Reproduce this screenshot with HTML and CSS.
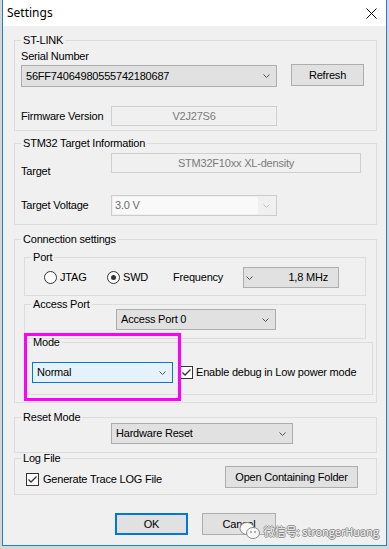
FILE: index.html
```html
<!DOCTYPE html>
<html>
<head>
<meta charset="utf-8">
<title>Settings</title>
<link rel="stylesheet" href="styles.css">
</head>
<body>
<div class="win">
    <div class="titlebar">
        <span class="title">Settings</span>
        <svg class="close" width="11" height="11" viewBox="0 0 11 11"><path d="M0.5 0.5L10.5 10.5M10.5 0.5L0.5 10.5" stroke="#000" stroke-width="1"/></svg>
    </div>

    <div class="content">
        <!-- ST-LINK -->
        <fieldset class="grp stlink">
            <legend>ST-LINK</legend>
            <div class="lbl">Serial Number</div>
            <div class="row serial_row">
                <div class="combo serial"><span>56FF74064980555742180687</span><svg class="chev" width="7" height="4" viewBox="0 0 7 4"><polyline points="0.5,0.5 3.5,3.5 6.5,0.5" fill="none" stroke="#505050"/></svg></div>
                <div class="btn refresh">Refresh</div>
            </div>
            <div class="row fw_row">
                <span class="col">Firmware Version</span>
                <div class="field fw">V2J27S6</div>
            </div>
        </fieldset>

        <!-- 目标信息 -->
        <fieldset class="grp target">
            <legend>STM32 Target Information</legend>
            <div class="row tgt_row">
                <span class="col tgt_lbl">Target</span>
                <div class="field tgt">STM32F10xx XL-density</div>
            </div>
            <div class="row volt_row">
                <span class="col">Target Voltage</span>
                <div class="combo off volt"><span class="inner">3.0 V</span><svg class="chev" width="7" height="4" viewBox="0 0 7 4"><polyline points="0.5,0.5 3.5,3.5 6.5,0.5" fill="none" stroke="#bdbdbd"/></svg></div>
            </div>
        </fieldset>

        <!-- 连接设置 -->
        <fieldset class="grp conn">
            <legend>Connection settings</legend>
            <fieldset class="grp port">
                <legend>Port</legend>
                <div class="row">
                    <label class="radio jtag"><span class="dot"></span>JTAG</label>
                    <label class="radio swd"><span class="dot on"></span>SWD</label>
                    <span class="freq_lbl">Frequency</span>
                    <div class="combo freq"><svg class="chev" width="7" height="4" viewBox="0 0 7 4"><polyline points="0.5,0.5 3.5,3.5 6.5,0.5" fill="none" stroke="#505050"/></svg><span>1,8 MHz</span></div>
                </div>
            </fieldset>
            <fieldset class="grp access">
                <legend>Access Port</legend>
                <div class="combo ap"><span>Access Port 0</span><svg class="chev" width="7" height="4" viewBox="0 0 7 4"><polyline points="0.5,0.5 3.5,3.5 6.5,0.5" fill="none" stroke="#505050"/></svg></div>
            </fieldset>
            <fieldset class="grp mode">
                <legend>Mode</legend>
                <div class="row">
                    <div class="combo md"><span>Normal</span><svg class="chev" width="7" height="4" viewBox="0 0 7 4"><polyline points="0.5,0.5 3.5,3.5 6.5,0.5" fill="none" stroke="#505050"/></svg></div>
                    <label class="check lowpower"><span class="box"><svg width="11" height="11" viewBox="0 0 11 11"><polyline points="1.5,5.5 4,8 9.5,2.5" fill="none" stroke="#333" stroke-width="1.3"/></svg></span>Enable debug in Low power mode</label>
                </div>
            </fieldset>
        </fieldset>

        <!-- 复位模式 -->
        <fieldset class="grp reset">
            <legend>Reset Mode</legend>
            <div class="combo rm"><span>Hardware Reset</span><svg class="chev" width="7" height="4" viewBox="0 0 7 4"><polyline points="0.5,0.5 3.5,3.5 6.5,0.5" fill="none" stroke="#505050"/></svg></div>
        </fieldset>

        <!-- 日志 -->
        <fieldset class="grp log">
            <legend>Log File</legend>
            <div class="row">
                <label class="check trace"><span class="box"><svg width="11" height="11" viewBox="0 0 11 11"><polyline points="1.5,5.5 4,8 9.5,2.5" fill="none" stroke="#333" stroke-width="1.3"/></svg></span>Generate Trace LOG File</label>
                <div class="btn folder">Open Containing Folder</div>
            </div>
        </fieldset>

        <div class="actions">
            <div class="btn ok">OK</div>
            <div class="btn cancel">Cancel</div>
        </div>
    </div>

    <div class="hl"></div>

    <div class="wm">
        <svg width="22" height="19" viewBox="0 0 22 19">
            <ellipse cx="8" cy="7.5" rx="7" ry="6" fill="#fafafa" stroke="#8a8a8a"/>
            <ellipse cx="14" cy="12" rx="6.5" ry="5.5" fill="#fafafa" stroke="#8a8a8a"/>
            <circle cx="12" cy="11" r="0.9" fill="#8a8a8a"/>
            <circle cx="16" cy="11" r="0.9" fill="#8a8a8a"/>
        </svg>
        <span>微信号: strongerHuang</span>
    </div>
</div>
</body>
</html>
```

FILE: styles.css
```css
html { background: #d6d6d6; }
body { margin: 0; font: 11px/13px "Liberation Sans", Arial, sans-serif; letter-spacing: -0.2px; color: #000; }

.win { position: relative; width: 385px; height: 546px; margin-left: 2px; box-sizing: border-box; border: 1px solid #1883d7; border-top: 0; background: #f0f0f0; }
.titlebar { height: 26px; background: #fff; display: flex; align-items: center; justify-content: space-between; padding: 0 9px 0 4px; }
.title { font: 12px/16px "Noto Sans", sans-serif; letter-spacing: 0; }

.content { padding: 8px 9px 0 11px; }

.grp { margin: 0; padding: 0 6px; border: 1px solid #dcdcdc; min-width: 0; }
.grp legend { padding: 0 2px; line-height: 13px; }

.row { display: flex; align-items: center; }
.col { width: 90px; flex: none; }

.combo { box-sizing: border-box; height: 21px; display: flex; align-items: center; justify-content: space-between; padding: 0 6px 0 4px; background: #e1e1e1; border: 1px solid #adadad; }
.chev { flex: none; }
.btn { box-sizing: border-box; height: 22px; display: flex; align-items: center; justify-content: center; background: #e1e1e1; border: 1px solid #adadad; }
.field { box-sizing: border-box; height: 20px; display: flex; align-items: center; justify-content: center; border: 1px solid #cfcfcf; color: #7a7a7a; }

/* ST-LINK */
.stlink { padding-top: 3px; padding-bottom: 4px; }
.serial_row { margin-top: 2px; align-items: flex-start; }
.serial { width: 256px; height: 22px; }
.refresh { width: 73px; margin: -1px 0 0 14px; }
.fw_row { margin-top: 19px; }
.fw { width: 166px; }

/* target */
.target { margin-top: 6px; padding-top: 3px; padding-bottom: 8px; }
.tgt_row { align-items: flex-start; }
.tgt_lbl { margin-top: 12px; }
.tgt { width: 250px; }
.volt_row { margin-top: 17px; }
.volt { width: 166px; padding: 1px 6px 1px 1px; border-color: #cccccc; background: #f0f0f0; color: #6d6d6d; }
.volt .inner { flex: 1; align-self: stretch; display: flex; align-items: center; padding-left: 2px; margin-right: 5px; background: #f9f9f9; }

/* connection */
.conn { margin-top: 8px; padding-top: 5px; padding-bottom: 7px; }
.port { margin: 0 4px 0 3px; padding-top: 3px; padding-bottom: 7px; }
.radio { display: flex; align-items: center; flex: none; }
.dot { width: 13px; height: 13px; box-sizing: border-box; border: 1px solid #333; border-radius: 50%; background: #fff; margin-right: 3px; display: flex; align-items: center; justify-content: center; }
.dot.on::after { content: ""; width: 5px; height: 5px; border-radius: 50%; background: #333; }
.jtag { margin-left: 13px; width: 63px; }
.swd { width: 66px; }
.freq_lbl { width: 70px; }
.freq { width: 96px; padding: 0 10px 0 2px; }

.access { margin: 2px 4px 0 3px; padding-bottom: 8px; }
.ap { margin: -2px 0 0 85px; width: 160px; }

.mode { margin: -3px -3px 0 3px; padding-top: 13px; padding-bottom: 11px; }
.md { margin-left: 1px; width: 141px; background: #e5f1fb; border-color: #0078d7; }
.check { display: flex; align-items: center; flex: none; }
.box { width: 13px; height: 13px; box-sizing: border-box; border: 1px solid #333; background: #fff; margin-right: 4px; display: flex; align-items: center; justify-content: center; }
.lowpower { margin-left: 7px; }
.lowpower .box { margin-right: 3px; }

/* reset / log */
.reset { margin-top: 8px; padding-bottom: 8px; }
.rm { margin: -1px 0 0 90px; width: 182px; }

.log { margin-top: -1px; padding: 1px 18px 6px 6px; }
.trace { margin: 4px 0 0 5px; }
.folder { width: 133px; margin-left: auto; }

.actions { display: flex; justify-content: center; gap: 14px; margin-top: 18px; }
.ok { width: 73px; border: 2px solid #0078d7; }
.cancel { width: 74px; }

/* 标注框 */
.hl { position: absolute; left: 21px; top: 333px; width: 157px; height: 68px; box-sizing: border-box; border: 3px solid #ff00ff; }

/* 水印 */
.wm { position: absolute; right: 7px; bottom: 5px; display: flex; align-items: center; gap: 3px; font: 11px/14px "Noto Sans CJK SC", sans-serif; letter-spacing: 0; color: #f4f4f4; text-shadow: 1px 0 0 #8a8a8a, -1px 0 0 #8a8a8a, 0 1px 0 #8a8a8a, 0 -1px 0 #8a8a8a; }
```
